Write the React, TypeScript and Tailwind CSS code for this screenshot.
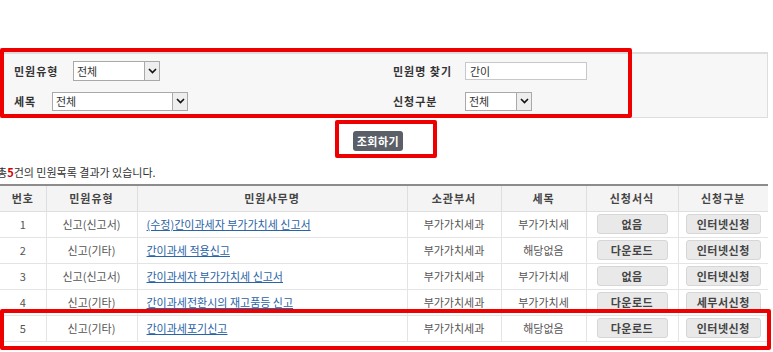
import React from 'react';

const Select = ({ width, height }: { width: string; height: string }) => (
  <div className={`flex ${width} ${height} border border-[#a9a9a9] bg-white`}>
    <span className="flex-1 pl-[3px] text-[11px] leading-none flex items-center text-[#333]">전체</span>
    <span className="w-[15px] border-l border-[#a9a9a9] bg-[#eeeeee] flex items-center justify-center">
      <svg width="9" height="6" viewBox="0 0 9 6">
        <path d="M1 1l3.5 3.5L8 1" fill="none" stroke="#111" strokeWidth="1.6" />
      </svg>
    </span>
  </div>
);

const rows = [
  { no: 1, type: '신고(신고서)', name: '(수정)간이과세자 부가가치세 신고서', dept: '부가가치세과', tax: '부가가치세', form: '없음', apply: '인터넷신청' },
  { no: 2, type: '신고(기타)', name: '간이과세 적용신고', dept: '부가가치세과', tax: '해당없음', form: '다운로드', apply: '인터넷신청' },
  { no: 3, type: '신고(신고서)', name: '간이과세자 부가가치세 신고서', dept: '부가가치세과', tax: '부가가치세', form: '없음', apply: '인터넷신청' },
  { no: 4, type: '신고(기타)', name: '간이과세전환시의 재고품등 신고', dept: '부가가치세과', tax: '부가가치세', form: '다운로드', apply: '세무서신청' },
  { no: 5, type: '신고(기타)', name: '간이과세포기신고', dept: '부가가치세과', tax: '해당없음', form: '다운로드', apply: '인터넷신청' },
];

const headers = ['번호', '민원유형', '민원사무명', '소관부서', '세목', '신청서식', '신청구분'];
const widths = ['w-[46px]', 'w-[91px]', 'w-[270px]', 'w-[94px]', 'w-[85px]', 'w-[92px]', 'w-[90px]'];

const Btn = ({ label, width }: { label: string; width: string }) => (
  <span className={`inline-flex ${width} h-[20px] items-center justify-center rounded-[3px] border border-[#d6d6d6] bg-[#e9e9e9] text-[11px] font-semibold tracking-[0.5px] text-[#444]`}>
    {label}
  </span>
);

const App = () => {
  return (
    <div
      className="relative w-[773px] h-[352px] overflow-hidden bg-white text-[11px] text-[#555]"
      style={{ fontFamily: '"Noto Sans CJK KR", "Noto Sans", sans-serif' }}
    >
      {/* Search panel */}
      <div className="mt-[52px] w-[768px] h-[66px] border-t-2 border-[#8c8c8c] border-b border-r border-[#dddddd] bg-[#f7f7f7] flex flex-col pt-[7px] gap-[10px]">
        <div className="flex items-center h-[20px]">
          <div className="w-[393px] pl-[14px] flex items-center">
            <span className="w-[59px] font-bold tracking-[1px] text-[#333]">민원유형</span>
            <Select width="w-[87px]" height="h-[20px]" />
          </div>
          <span className="w-[72px] font-bold tracking-[1px] text-[#333]">민원명 찾기</span>
          <div className="w-[122px] h-[18px] border border-[#c8c8c8] bg-white pl-[4px] flex items-center text-[#333]">간이</div>
        </div>
        <div className="flex items-center h-[20px]">
          <div className="w-[393px] pl-[14px] flex items-center">
            <span className="w-[38px] font-bold tracking-[1px] text-[#333]">세목</span>
            <Select width="w-[136px]" height="h-[19px]" />
          </div>
          <span className="w-[72px] font-bold tracking-[1px] text-[#333]">신청구분</span>
          <Select width="w-[67px]" height="h-[19px]" />
        </div>
      </div>

      {/* Search button */}
      <div className="mt-[13px] ml-[353px] w-[50px] h-[20px] rounded-[3px] bg-[#5b6068] text-white text-[11px] font-semibold tracking-[0.5px] flex items-center justify-center">
        조회하기
      </div>

      {/* Result count */}
      <div className="mt-[14px] -ml-[3px] h-[14px] leading-[14px] text-[#333]">
        총<span className="font-bold text-[#d40000]">5</span>건의 민원목록 결과가 있습니다.
      </div>

      {/* Table */}
      <table className="mt-[5px] w-[768px] table-fixed border-collapse border-t-2 border-[#8c8c8c]">
        <thead>
          <tr className="h-[26px] bg-[#f4f4f4]">
            {headers.map((h, i) => (
              <th
                key={h}
                className={`${widths[i]} border-b border-[#dedede] ${i > 0 ? 'border-l' : ''} font-bold tracking-[1px] text-[#444] text-center p-0`}
              >
                {h}
              </th>
            ))}
          </tr>
        </thead>
        <tbody>
          {rows.map((r) => (
            <tr key={r.no} className="h-[26px]">
              <td className="border-b border-[#e4e4e4] text-center p-0">{r.no}</td>
              <td className="border-b border-l border-[#e4e4e4] text-center p-0">{r.type}</td>
              <td className="border-b border-l border-[#e4e4e4] pl-[9px] p-0">
                <span className="text-[#2a64a6] underline">{r.name}</span>
              </td>
              <td className="border-b border-l border-[#e4e4e4] text-center p-0">{r.dept}</td>
              <td className="border-b border-l border-[#e4e4e4] text-center p-0">{r.tax}</td>
              <td className="border-b border-l border-[#e4e4e4] text-center p-0">
                <Btn label={r.form} width="w-[71px]" />
              </td>
              <td className="border-b border-l border-[#e4e4e4] text-center p-0">
                <Btn label={r.apply} width="w-[75px]" />
              </td>
            </tr>
          ))}
        </tbody>
      </table>

      {/* Red annotation boxes */}
      <div className="absolute left-0 top-[48px] w-[632px] h-[70px] border-[4px] border-[#ee0000] rounded-[2px]" />
      <div className="absolute left-[335px] top-[120px] w-[102px] h-[38px] border-[4px] border-[#ee0000] rounded-[2px]" />
      <div className="absolute left-0 top-[309px] w-[771px] h-[41px] border-[4px] border-[#ee0000] rounded-[2px]" />
    </div>
  );
};

export default App;
